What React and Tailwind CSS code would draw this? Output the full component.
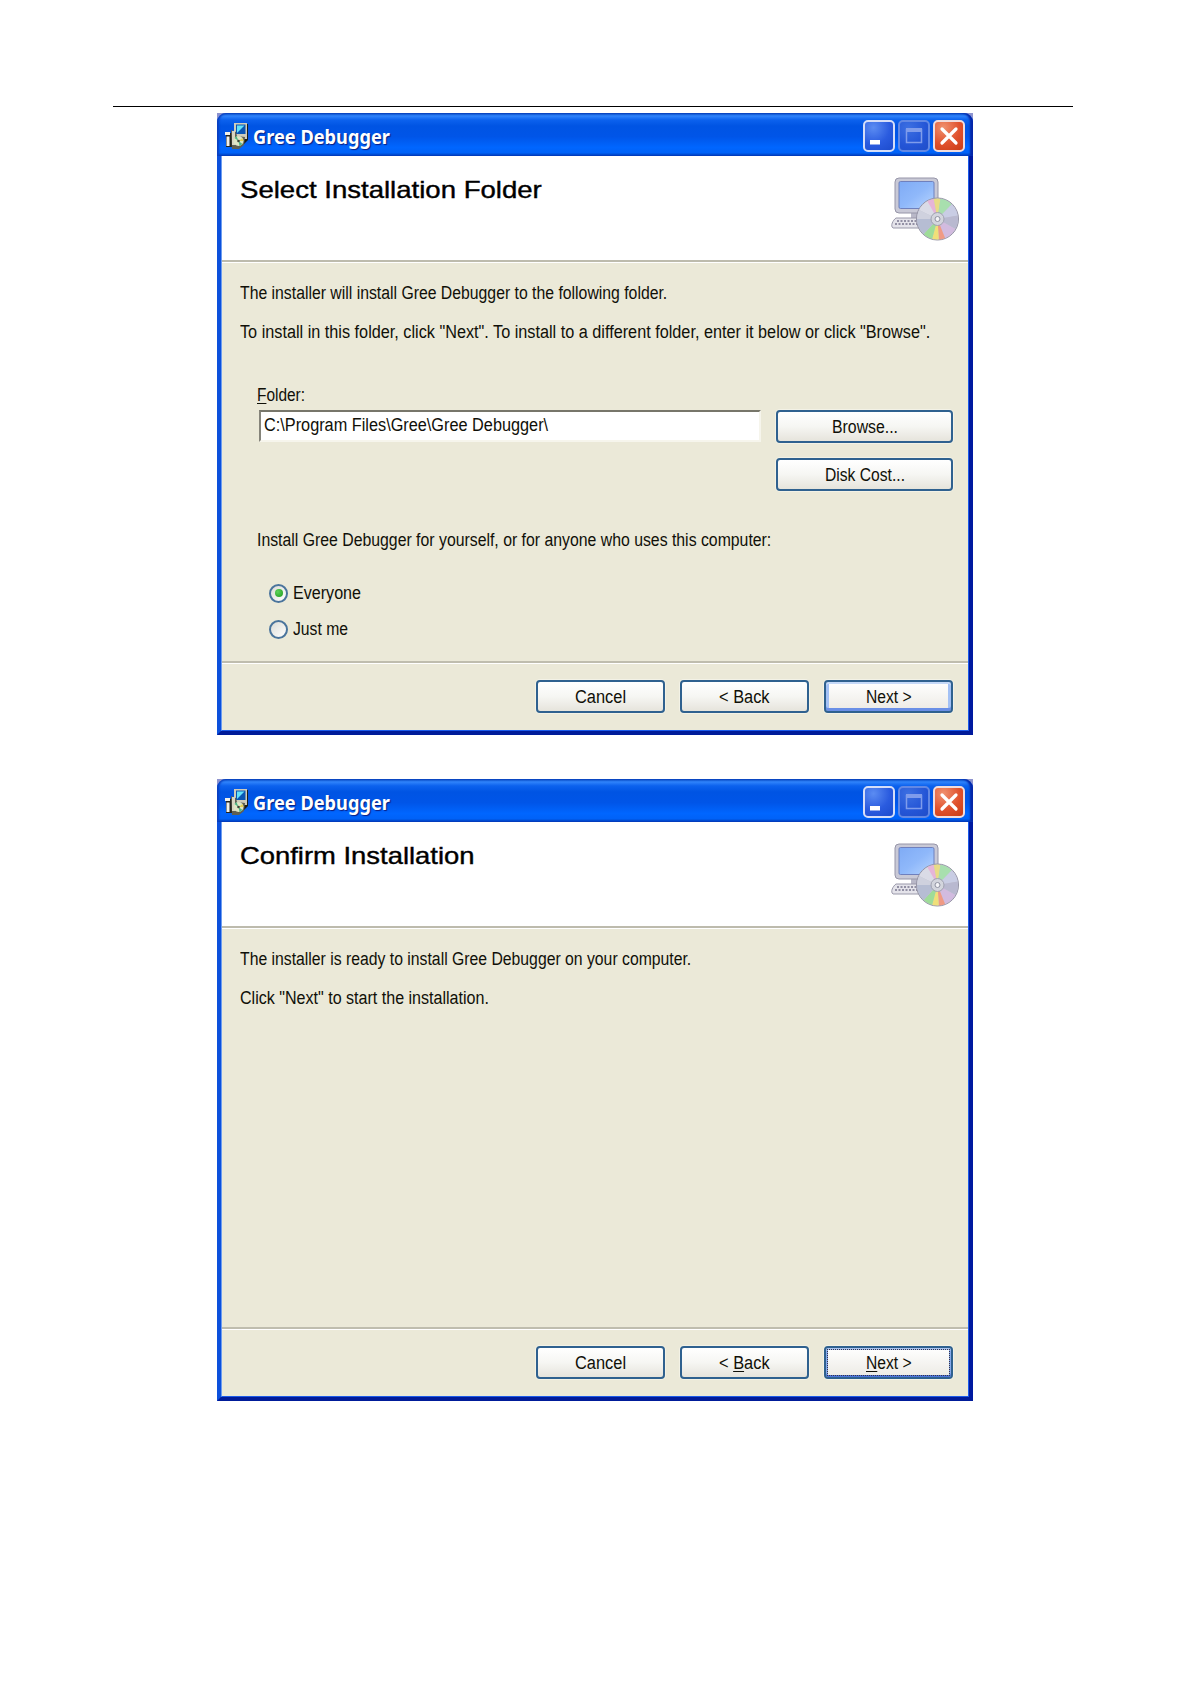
import React, { useLayoutEffect, useRef, useState } from "react";
import clsx from "clsx";

// squeezes one line of text to the width it has on screen
const Fit = ({ width, className, children }) => {
  const ref = useRef(null);
  const [scale, setScale] = useState(1);

  useLayoutEffect(() => {
    setScale(width / ref.current.offsetWidth);
  }, [width]);

  return (
    <span className="block" style={{ width }}>
      <span
        ref={ref}
        className={clsx("inline-block origin-left whitespace-nowrap", className)}
        style={{ transform: `scaleX(${scale})` }}
      >
        {children}
      </span>
    </span>
  );
};

const Key = ({ children }) => (
  <span className="underline decoration-1 underline-offset-2">{children}</span>
);

const AppIcon = () => (
  <svg className="h-[26px] w-6" viewBox="0 0 24 26">
    <path d="M10 1h13v16l-4 4H9z" fill="#1c1d16" />
    <path d="M9 0h13v16H9z" fill="#cfccba" />
    <path d="M11 1.500h9.500v9.500H11z" fill="#0a55b4" />
    <path d="M12 2.500h7.500L12 10z" fill="#62e2fa" />
    <path d="M1 10h6v14H1z" fill="#24241e" />
    <path d="M0 9h5v3H0zM1.500 13.500h3V23h-3z" fill="#f1f0ea" />
    <path d="M6 7l5 2 1 4 8 1-1 8-5 4H7z" fill="#5f6054" />
    <path d="M7 8h3v14H7z" fill="#d8d5c2" />
    <circle cx="13.500" cy="18" r="5" fill="#dfe6c6" />
    <path d="M13.500 18l-4-3 2-2zM13.500 18l4 3-3 2z" fill="#4fb584" />
    <path d="M13.500 18l4-3 1 3z" fill="#e3cf55" />
    <circle cx="13.500" cy="18" r="1.300" fill="#3c4438" />
  </svg>
);

const InstallerIcon = () => (
  <svg className="h-[66px] w-[70px]" viewBox="0 0 70 66">
    <defs>
      <linearGradient id="screen" x1="0" y1="0" x2="1" y2="1">
        <stop offset="0" stopColor="#7fabf5" />
        <stop offset="0.500" stopColor="#8fb8fa" />
        <stop offset="1" stopColor="#b8d5ff" />
      </linearGradient>
      <clipPath id="disc">
        <circle cx="46.500" cy="42" r="20.500" />
      </clipPath>
    </defs>
    <path d="M20 35h14v7H20z" fill="#b9b8c8" />
    <rect x="4" y="1" width="43" height="35" rx="4" fill="#c9c9d6" stroke="#9695a8" />
    <rect x="8" y="4.500" width="35" height="27" rx="1.500" fill="url(#screen)" stroke="#6f80bd" />
    <path d="M5 41h28v10H2c-3-2 0-8 3-10z" fill="#e4e3ea" stroke="#9a99aa" />
    <path d="M6 44h22M4 47h24" stroke="#77768d" strokeWidth="1.500" strokeDasharray="2 1.500" />
    <circle cx="46.500" cy="42" r="21" fill="#c5c5d2" stroke="#9493a5" />
    <g clipPath="url(#disc)">
      <path d="M46.500 42L26 32 36 20z" fill="#dadbe6" />
      <path d="M46.500 42L34 20 42 18z" fill="#e6b5d8" />
      <path d="M46.500 42L42 18 50 18z" fill="#e8dc86" />
      <path d="M46.500 42L50 18 62 26z" fill="#a8dfae" />
      <path d="M46.500 42L62 26 70 38z" fill="#c9cde4" />
      <path d="M46.500 42L70 38 68 54z" fill="#b9b9d0" />
      <path d="M46.500 42L68 54 56 66z" fill="#d2bbdf" />
      <path d="M46.500 42L56 66 48 66z" fill="#f09a84" />
      <path d="M46.500 42L48 66 40 66z" fill="#f0df79" />
      <path d="M46.500 42L40 66 30 60z" fill="#9edc98" />
      <path d="M46.500 42L30 60 24 42z" fill="#b6bdd3" />
      <path d="M46.500 42L24 42 26 32z" fill="#cfd1de" />
    </g>
    <circle cx="46.500" cy="42" r="6.500" fill="#d3d5dd" stroke="#a0a2b0" />
    <circle cx="46.500" cy="42" r="2.500" fill="#f4f4f7" stroke="#8f92a1" />
  </svg>
);

const CaptionButton = ({ className, children }) => (
  <button className={clsx("h-8 w-8 rounded-[5px] border-2", className)}>
    <svg className="h-7 w-7" viewBox="0 0 28 28" fill="none">
      {children}
    </svg>
  </button>
);

const TitleBar = () => (
  <header className="flex h-[43px] shrink-0 items-start rounded-t-[9px] bg-[linear-gradient(180deg,#0a4fc4_0%,#2f83fb_7%,#0c62ee_16%,#0054e3_30%,#0055e8_55%,#0066ff_80%,#0062f8_92%,#0040bb_100%)] pt-[7px] pr-[8px] pl-2 inset-shadow-[2px_0_2px_#0a3fc0,-3px_0_2px_#0526a8]">
    <div className="mt-[3px]">
      <AppIcon />
    </div>
    <div className="mt-px ml-1">
      <Fit
        width={137}
        className="font-['Noto_Sans','Open_Sans',sans-serif] text-[19px] leading-8 font-bold text-white [text-shadow:1px_1px_1px_#0a1e80]"
      >
        Gree Debugger
      </Fit>
    </div>
    <div className="ml-auto flex gap-[3px]">
      <CaptionButton className="border-[#d5def8] bg-[radial-gradient(circle_at_30%_20%,#5b8cf2,#2a5bdf_55%,#1c4bcd)]">
        <path d="M5 18h10v4.500H5z" fill="#fff" />
      </CaptionButton>
      <CaptionButton className="border-[#6288e4] bg-[radial-gradient(circle_at_30%_20%,#3c6fe2,#2455d6_60%,#1f4dc9)]">
        <path d="M6.500 7.500h15v13h-15z" stroke="#7f9ceb" strokeWidth="1.500" />
        <path d="M6 6h16v4H6z" fill="#7f9ceb" />
      </CaptionButton>
      <CaptionButton className="border-[#f1dcdc] bg-[radial-gradient(circle_at_30%_20%,#f0916f,#e0512d_55%,#c93c15)]">
        <path d="M7 7l14 14M21 7L7 21" stroke="#fff" strokeWidth="3.200" strokeLinecap="round" />
      </CaptionButton>
    </div>
  </header>
);

const Button = ({ width, className, face, focused, children }) => (
  <button
    className={clsx(
      "flex h-[33px] items-center justify-center rounded-[4px] border-2 border-[#2f618f] shadow-[0_0_0_1px_#f3f2e6]",
      face || "bg-linear-to-b from-white via-[#f6f6f3] to-[#e6e4dc]",
      className
    )}
  >
    {focused ? (
      <span className="flex h-[27px] w-[123px] items-center justify-center border border-dotted border-[#34344c]">
        <Fit width={width}>{children}</Fit>
      </span>
    ) : (
      <Fit width={width}>{children}</Fit>
    )}
  </button>
);

const Radio = ({ checked, width, children }) => (
  <label className="flex h-9 items-center">
    <span className="flex h-[19px] w-[19px] items-center justify-center rounded-full border-2 border-[#4a749c] bg-linear-to-br from-[#dcdcd6] to-white">
      {checked && (
        <span className="h-2 w-2 rounded-full bg-[radial-gradient(circle_at_35%_35%,#5fd35b,#1e9a1c)]" />
      )}
    </span>
    <span className="ml-[5px]">
      <Fit width={width}>{children}</Fit>
    </span>
  </label>
);

const InstallerWindow = ({ title, titleWidth, children, footer }) => (
  <section className="flex h-[622px] w-[756px] flex-col bg-[#8d93cf] font-['Liberation_Sans',Arial,sans-serif] text-[18px] leading-6 text-[#101008]">
    <TitleBar />
    <div className="flex flex-1 flex-col border-r-4 border-b-4 border-l-4 border-r-[#0019a0] border-b-[#001b99] border-l-[#0c50dc]">
      <div className="flex flex-1 flex-col border-r border-b border-l border-r-[#1c5bea] border-b-[#1c5bea] border-l-[#6d9df0]">
        <div className="flex h-[104px] justify-between bg-white">
          <h1 className="pt-[18px] pl-[18px] text-black">
            <Fit width={titleWidth} className="text-[24px] leading-8 [-webkit-text-stroke:0.4px_#000]">
              {title}
            </Fit>
          </h1>
          <div className="pt-[21px] pr-[7px]">
            <InstallerIcon />
          </div>
        </div>
        <div className="h-[3px] border-t-2 border-[#bdbbad] bg-white" />
        <div className="flex flex-1 flex-col bg-[#ebe9d8]">
          <div className="h-[398px]">{children}</div>
          <div className="h-[3px] border-t-2 border-[#bfbdae] bg-white" />
          <div className="flex justify-end gap-[15px] pt-4 pr-[15px]">{footer}</div>
        </div>
      </div>
    </div>
  </section>
);

const App = () => {
  return (
    <main className="flex min-h-[1684px] w-[1191px] flex-col bg-white">
      <hr className="mt-[106px] ml-[113px] w-[960px] border-t border-black" />
      <div className="mt-[6px] ml-[217px] flex flex-col gap-11">
        <InstallerWindow
          title="Select Installation Folder"
          titleWidth={302}
          footer={
            <>
              <Button width={51} className="w-[129px]">Cancel</Button>
              <Button width={51} className="w-[129px]">&lt; Back</Button>
              <Button
                width={46}
                className="w-[129px]"
                face="bg-[linear-gradient(#fff,#eceae4)] inset-shadow-[0_2px_0_#c5d9f8,0_-3px_0_#6a8fe6,3px_0_0_#a3c1f5,-3px_0_0_#a3c1f5]"
              >
                Next &gt;
              </Button>
            </>
          }
        >
          <div className="pt-[18px] pl-[18px]">
            <Fit width={427}>
              The installer will install Gree Debugger to the following folder.
            </Fit>
            <div className="mt-[15px]">
              <Fit width={690}>
                To install in this folder, click "Next". To install to a different folder, enter it below or click "Browse".
              </Fit>
            </div>
          </div>
          <div className="flex justify-between pt-[39px] pr-[15px] pl-[35px]">
            <div>
              <Fit width={48}>
                <Key>F</Key>older:
              </Fit>
              <div className="mt-[3px] ml-[2px] h-8 w-[502px] border-2 border-t-[#77766a] border-r-[#f6f5ec] border-b-[#f6f5ec] border-l-[#85847a] bg-white pt-px pl-[3px]">
                <Fit width={284}>{"C:\\Program Files\\Gree\\Gree Debugger\\"}</Fit>
              </div>
            </div>
            <div className="flex flex-col gap-[15px] pt-[27px]">
              <Button width={66} className="w-[177px]">Browse...</Button>
              <Button width={80} className="w-[177px]">Disk Cost...</Button>
            </div>
          </div>
          <div className="pt-[37px] pl-[35px]">
            <Fit width={514}>
              Install Gree Debugger for yourself, or for anyone who uses this computer:
            </Fit>
          </div>
          <div className="pt-[23px] pl-[47px]">
            <Radio checked width={68}>Everyone</Radio>
            <Radio width={55}>Just me</Radio>
          </div>
        </InstallerWindow>

        <InstallerWindow
          title="Confirm Installation"
          titleWidth={234}
          footer={
            <>
              <Button width={51} className="w-[129px]">Cancel</Button>
              <Button width={51} className="w-[129px]">
                &lt; <Key>B</Key>ack
              </Button>
              <Button
                width={46}
                focused
                className="w-[129px]"
                face="bg-[linear-gradient(#fff,#eceae4)] inset-shadow-[0_2px_0_#a9c3f0,0_-2px_0_#4d74d8,2px_0_0_#86a9ea,-2px_0_0_#86a9ea]"
              >
                <Key>N</Key>ext &gt;
              </Button>
            </>
          }
        >
          <div className="pt-[18px] pl-[18px]">
            <Fit width={451}>The installer is ready to install Gree Debugger on your computer.</Fit>
            <div className="mt-[15px]">
              <Fit width={249}>Click "Next" to start the installation.</Fit>
            </div>
          </div>
        </InstallerWindow>
      </div>
    </main>
  );
};

export default App;
